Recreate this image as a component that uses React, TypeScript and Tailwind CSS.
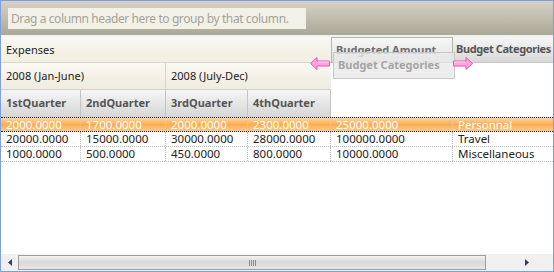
import React from "react";

const cols = [80, 85, 82, 83, 122, 100];

const rows = [
  ["2000.0000", "1700.0000", "2000.0000", "2300.0000", "25000.0000", "Personnal"],
  ["20000.0000", "15000.0000", "30000.0000", "28000.0000", "100000.0000", "Travel"],
  ["1000.0000", "500.0000", "450.0000", "800.0000", "10000.0000", "Miscellaneous"],
];

function Arrow({ dir }: { dir: "left" | "right" }) {
  return (
    <svg width="20" height="13" viewBox="0 0 20 13" style={{ transform: dir === "right" ? "scaleX(-1)" : undefined }}>
      <path
        d="M0.5 6.5 L7 0.5 L7 4 L19.5 4 L19.5 9 L7 9 L7 12.5 Z"
        fill="#ffa6dc"
        stroke="#f050b8"
        strokeWidth="1"
      />
      <path d="M8 5 L19 5" stroke="#ffd6ef" strokeWidth="1" />
    </svg>
  );
}

export default function App() {
  return (
    <div className="w-[554px] h-[272px] border border-[#7f9ee0] bg-white flex flex-col overflow-hidden font-['Noto_Sans',sans-serif] text-[11px]">
      {/* group panel */}
      <div className="h-[34px] shrink-0 bg-gradient-to-b from-[#d6d1c6] to-[#aca897] pl-[7px] pt-[7px]">
        <div className="w-[298px] h-[21px] bg-[#f2f1e8] text-[#a5a298] text-[12px] tracking-[-0.4px] leading-[21px] pl-[3px] whitespace-nowrap">
          Drag a column header here to group by that column.
        </div>
      </div>
      <div className="h-[2px] shrink-0 bg-[#eef3f1]" />
      {/* header */}
      <div className="relative flex h-[80px] shrink-0 whitespace-nowrap">
        <div className="w-[330px] shrink-0 flex flex-col">
          <div className="h-[26px] flex items-center pl-[5px] pt-[2px] bg-gradient-to-b from-[#f9f8f2] to-[#f1eee1] border-b border-[#dcd9cc] text-[#222]">
            Expenses
          </div>
          <div className="h-[27px] flex border-b border-[#d4d2c8] bg-gradient-to-b from-[#f9f8f2] to-[#efecdf] text-[#222]">
            <div className="w-[165px] flex items-center pl-[5px] border-r border-[#d8d5c8]">2008 (Jan-June)</div>
            <div className="flex-1 flex items-center pl-[5px]">2008 (July-Dec)</div>
          </div>
          <div className="h-[27px] flex bg-gradient-to-b from-[#f6f6f6] to-[#d6d6d6] font-bold text-[#555]">
            <div className="w-[80px] flex items-center pl-[5px] border-r border-[#c4c4c4]">1stQuarter</div>
            <div className="w-[85px] flex items-center pl-[5px] border-r border-[#c4c4c4]">2ndQuarter</div>
            <div className="w-[82px] flex items-center pl-[5px] border-r border-[#c4c4c4]">3rdQuarter</div>
            <div className="flex-1 flex items-center pl-[5px] border-r border-[#c4c4c4]">4thQuarter</div>
          </div>
        </div>
        <div className="flex-1 min-w-0 flex flex-col">
          <div className="h-[26px] flex">
            <div className="w-[122px] shrink-0 flex items-center pl-[4px] bg-gradient-to-b from-[#f7f7f7] to-[#e2e2e2] border border-[#b4b4b4] font-bold text-[#6f6f6f]">
              Budgeted Amount
            </div>
            <div className="flex-1 min-w-0 flex items-center pl-[3px] tracking-[-0.4px] bg-gradient-to-b from-[#f6f6f6] to-[#d8d8d8] border-b border-[#c4c4c4] font-bold text-[#555]">
              Budget Categories
            </div>
          </div>
        </div>
        {/* drag ghost */}
        <div className="absolute left-[332px] top-[15px] w-[122px] h-[27px] bg-[#e9e9e9]/80 border border-[#c8c8c8] flex items-center pl-[4px] font-bold text-[#a4a4a4]">
          Budget Categories
        </div>
        <div className="absolute left-[309px] top-[20px]">
          <Arrow dir="left" />
        </div>
        <div className="absolute left-[452px] top-[20px]">
          <Arrow dir="right" />
        </div>
      </div>
      {/* rows */}
      <div className="flex flex-col text-[11.5px]">
        {rows.map((r, i) => (
          <div
            key={i}
            className={
              i === 0
                ? "h-[15px] flex border-y border-dotted border-[#222] bg-gradient-to-b from-[#fcd6a4] via-[#f9ad4c] to-[#fbc98c] text-white"
                : "h-[15px] flex border-b border-dotted border-[#bdbdbd] text-[#222]"
            }
          >
            {r.map((c, j) => (
              <div
                key={j}
                style={{ width: cols[j] }}
                className={
                  "shrink-0 pl-[5px] leading-[13px] whitespace-nowrap overflow-hidden " +
                  (j < 5 ? "border-r border-dotted " + (i === 0 ? "border-[#e8c9a0]" : "border-[#bdbdbd]") : "")
                }
              >
                {c}
              </div>
            ))}
          </div>
        ))}
      </div>
      <div className="flex-1" />
      {/* scrollbar */}
      <div className="h-[17px] shrink-0 bg-[#f0f0f0] flex items-center">
        <div className="w-[17px] flex justify-center">
          <svg width="4" height="7" viewBox="0 0 4 7">
            <path d="M4 0 L0 3.5 L4 7 Z" fill="#2f3f66" />
          </svg>
        </div>
        <div className="w-[468px] h-[15px] border border-[#9e9e9e] bg-gradient-to-b from-[#f2f2f2] via-[#d9d9d9] to-[#e6e6e6] flex items-center justify-center gap-[1px]">
          <div className="w-[1px] h-[6px] bg-[#8a8a8a]" />
          <div className="w-[1px] h-[6px] bg-[#8a8a8a]" />
          <div className="w-[1px] h-[6px] bg-[#8a8a8a]" />
          <div className="w-[1px] h-[6px] bg-[#8a8a8a]" />
        </div>
        <div className="flex-1" />
        <div className="w-[37px] flex justify-start pl-[9px]">
          <svg width="4" height="7" viewBox="0 0 4 7">
            <path d="M0 0 L4 3.5 L0 7 Z" fill="#2f3f66" />
          </svg>
        </div>
      </div>
    </div>
  );
}
